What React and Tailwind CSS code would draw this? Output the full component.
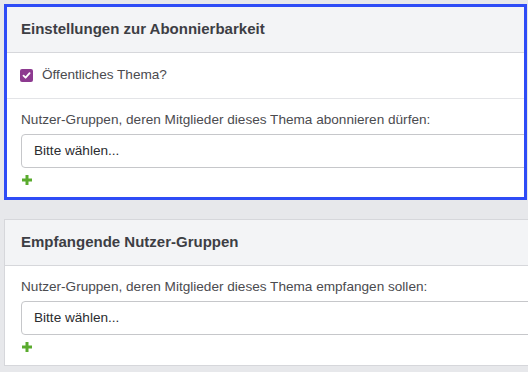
import React from "react";

function Plus() {
  return (
    <svg width="10" height="10" viewBox="0 0 10 10" className="block">
      <rect x="3.5" y="0" width="3" height="10" fill="#5aab2e" />
      <rect x="0" y="3.5" width="10" height="3" fill="#5aab2e" />
    </svg>
  );
}

function GroupSection({ label, pad }) {
  return (
    <div className={"pt-3 overflow-hidden " + pad}>
      <div className="h-[18px] leading-[18px] text-[13.6px] text-[#4b4b4f] whitespace-nowrap">{label}</div>
      <div className="mt-[5px] h-[34px] w-[560px] rounded-[4px] border border-[#c6c7ca] bg-white flex items-center pl-3 text-[13.6px] text-[#2c2c30]">
        Bitte wählen...
      </div>
      <div className="mt-[7px] pl-[1px]">
        <Plus />
      </div>
    </div>
  );
}

export default function App() {
  return (
    <div
      className="w-[528px] h-[372px] overflow-hidden bg-[#e7e8eb]"
      style={{ fontFamily: '"Liberation Sans", Arial, sans-serif' }}
    >
      <div className="pt-1 pl-1">
        <div className="w-[523px] border-[3px] border-[#2e4cf6] bg-white">
          <div className="h-[46px] bg-[#f3f4f6] border-b border-[#d6d7db] flex items-center pl-[14px] text-[15px] font-bold text-[#3d3e44]">
            Einstellungen zur Abonnierbarkeit
          </div>
          <div className="h-[46px] border-b border-[#e3e4e7] flex items-center pl-[13px]">
            <div className="w-[13px] h-[13px] rounded-[2px] bg-[#8d3a90] flex items-center justify-center">
              <svg width="9" height="9" viewBox="0 0 9 9">
                <path d="M1.5 4.6 L3.6 6.7 L7.6 2.2" stroke="white" strokeWidth="1.8" fill="none" strokeLinecap="round" strokeLinejoin="round" />
              </svg>
            </div>
            <span className="ml-[9px] text-[13.6px] text-[#4b4b4f]">Öffentliches Thema?</span>
          </div>
          <GroupSection pad="pl-[14px] pb-[12px]" label="Nutzer-Gruppen, deren Mitglieder dieses Thema abonnieren dürfen:" />
        </div>
        <div className="mt-[19px] w-[560px] border border-[#d6d7db] bg-white">
          <div className="h-[46px] bg-[#f3f4f6] border-b border-[#d6d7db] flex items-center pl-4 text-[15px] font-bold text-[#3d3e44]">
            Empfangende Nutzer-Gruppen
          </div>
          <GroupSection pad="pl-4 pb-[13px]" label="Nutzer-Gruppen, deren Mitglieder dieses Thema empfangen sollen:" />
        </div>
      </div>
    </div>
  );
}
